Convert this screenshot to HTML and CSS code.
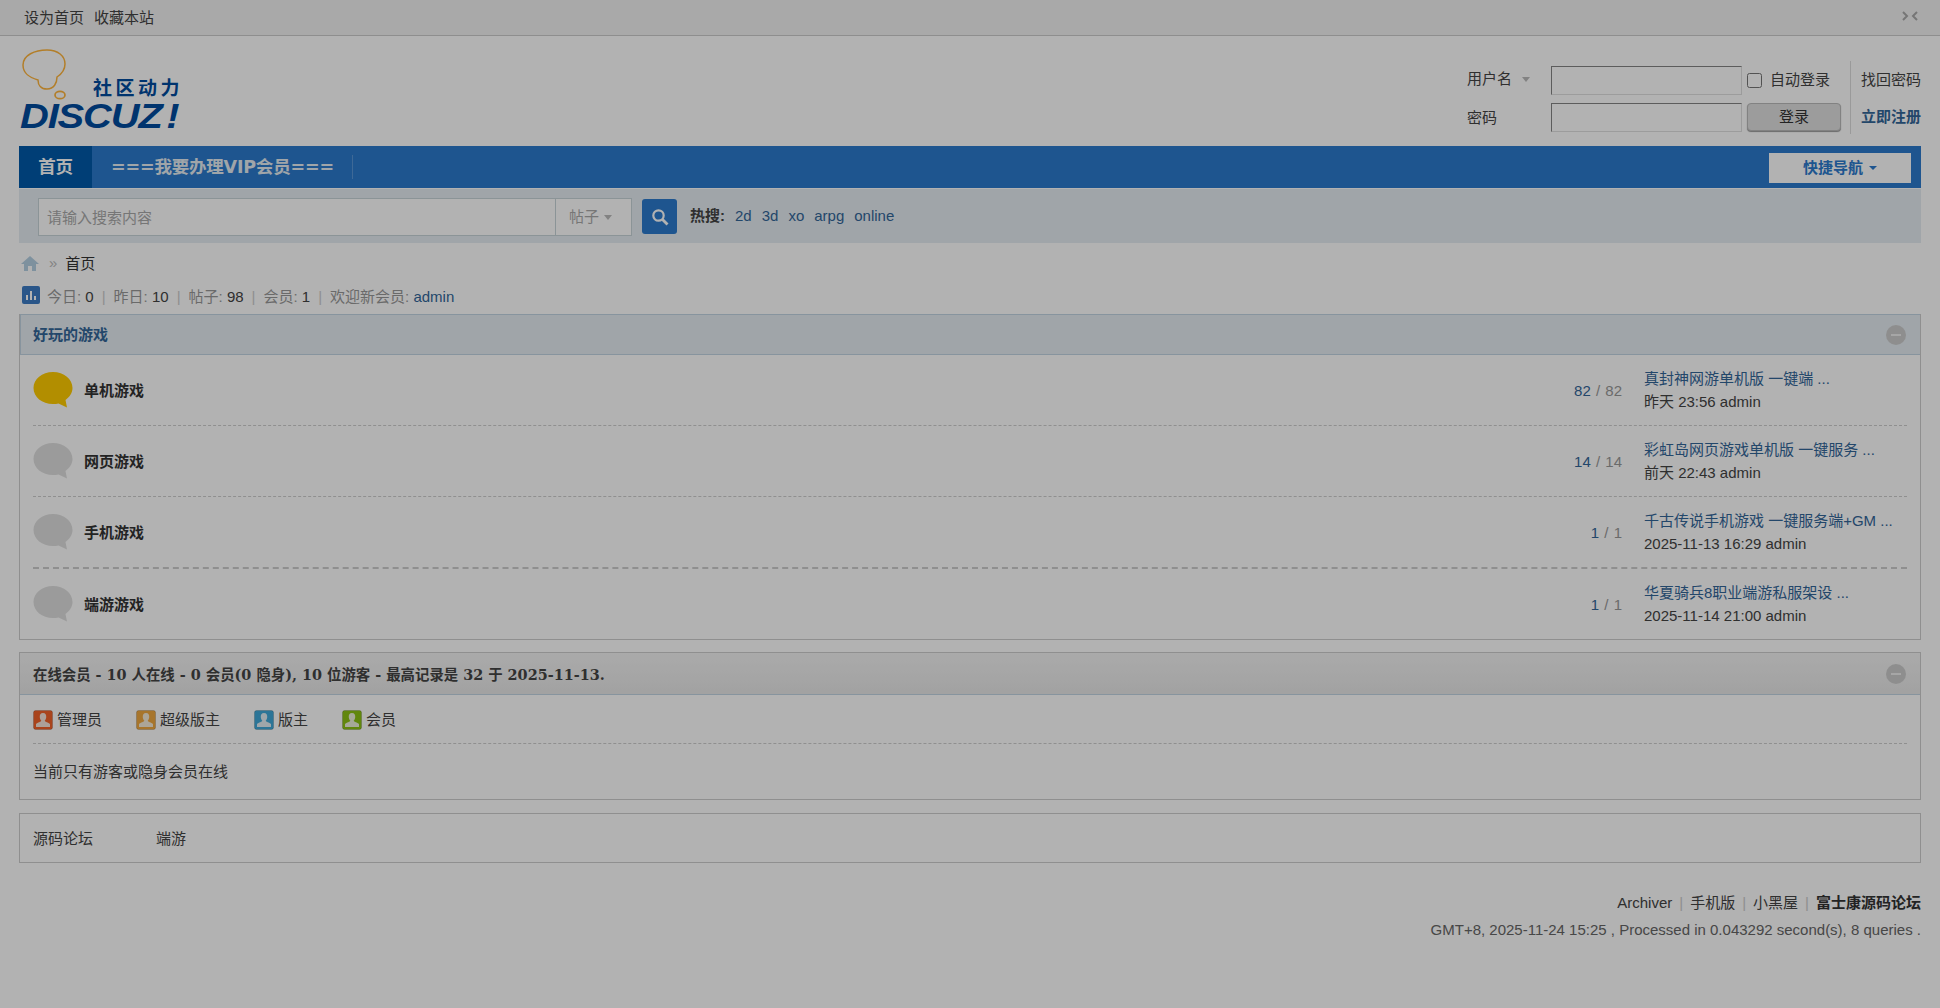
FILE: index.html
```html
<!DOCTYPE html>
<html lang="zh-CN">
<head>
<meta charset="utf-8">
<title>社区动力 Discuz!</title>
<link rel="stylesheet" href="styles.css">
</head>
<body>
<div class="topbar">
  <div class="topbar-links"><a>设为首页</a><a>收藏本站</a></div>
  <svg class="collapse-icon" width="16" height="10" viewBox="0 0 16 10"><path d="M1 1l4 4-4 4M15 1l-4 4 4 4" fill="none" stroke="#aaa" stroke-width="2"/></svg>
</div>
<div class="wrap">
  <header class="header">
    <div class="logo">
      <svg class="logo-bubble" width="60" height="64" viewBox="0 0 60 64">
        <path d="M13 25C13 15 25 10 37 10 48 10 55 16 55 24 55 31 50 35 47 37 47 43 44 49 37 49 31 49 28 45 28 40 20 38 13 33 13 25z" fill="none" stroke="#ffb53c" stroke-width="1.5"/>
        <ellipse cx="50" cy="55" rx="5" ry="3.700" fill="none" stroke="#ffb53c" stroke-width="1.700"/>
      </svg>
      <span class="logo-cn">社区动力</span>
      <span class="logo-en">DISCUZ<span class="logo-bang">!</span></span>
    </div>
    <form class="login">
      <div class="login-labels">
        <div class="login-label">用户名<i class="caret-grey"></i></div>
        <div class="login-label second">密码</div>
      </div>
      <div class="login-inputs">
        <input class="login-input" type="text">
        <input class="login-input" type="password">
      </div>
      <div class="login-actions">
        <label class="auto-login"><input class="check" type="checkbox">自动登录</label>
        <button class="login-btn" type="button">登录</button>
      </div>
      <div class="login-links">
        <a>找回密码</a>
        <a class="register">立即注册</a>
      </div>
    </form>
  </header>

  <nav class="nav">
    <a class="nav-item active">首页</a>
    <a class="nav-item">===我要办理VIP会员===</a>
    <a class="quick-nav">快捷导航<i class="caret-blue"></i></a>
  </nav>

  <div class="search">
    <div class="search-box">
      <span class="search-hint">请输入搜索内容</span>
      <span class="search-type">帖子<i class="caret-grey"></i></span>
    </div>
    <button class="search-btn" type="button">
      <svg width="20" height="20" viewBox="0 0 20 20"><circle cx="8.500" cy="8.500" r="5.200" fill="none" stroke="#fff" stroke-width="2.200"/><path d="M12.500 12.500l5 5" stroke="#fff" stroke-width="2.800"/></svg>
    </button>
    <div class="hot"><strong>热搜:</strong><a>2d</a><a>3d</a><a>xo</a><a>arpg</a><a>online</a></div>
  </div>

  <div class="crumb">
    <svg width="18" height="15" viewBox="0 0 18 15"><path d="M9 0L0 8h3v7h4v-5h4v5h4V8h3z" fill="#b5d0e3"/></svg>
    <em>»</em><span>首页</span>
  </div>

  <div class="stats">
    <svg class="stats-icon" width="18" height="18" viewBox="0 0 18 18"><rect width="18" height="18" rx="2" fill="#3d7cc4"/><path d="M4 9h2v5H4zM8 5h2v9H8zM12 10h2v4h-2z" fill="#fff"/></svg>
    <span>今日: <b>0</b></span><i>|</i><span>昨日: <b>10</b></span><i>|</i><span>帖子: <b>98</b></span><i>|</i><span>会员: <b>1</b></span><i>|</i><span>欢迎新会员: <a>admin</a></span>
  </div>

  <section class="panel">
    <div class="panel-head blue">
      <h2>好玩的游戏</h2>
      <span class="toggle"></span>
    </div>
    <div class="forum-row">
      <svg class="bubble" width="40" height="36" viewBox="0 0 40 36"><path d="M20 0C9 0 0.500 7 0.500 16S9 32 20 32c2 0 4-.2 5.500-.6L34 35.500 32.500 28C36.500 25 39.500 21 39.500 16 39.500 7 31 0 20 0z" fill="#ffcc00"/></svg>
      <a class="forum-name">单机游戏</a>
      <div class="forum-count"><a>82</a> / <span>82</span></div>
      <div class="forum-last"><a>真封神网游单机版 一键端 ...</a><div>昨天 23:56 admin</div></div>
    </div>
    <div class="forum-row">
      <svg class="bubble" width="40" height="36" viewBox="0 0 40 36"><path d="M20 0C9 0 0.500 7 0.500 16S9 32 20 32c2 0 4-.2 5.500-.6L34 35.500 32.500 28C36.500 25 39.500 21 39.500 16 39.500 7 31 0 20 0z" fill="#dfdfdf"/></svg>
      <a class="forum-name">网页游戏</a>
      <div class="forum-count"><a>14</a> / <span>14</span></div>
      <div class="forum-last"><a>彩虹岛网页游戏单机版 一键服务 ...</a><div>前天 22:43 admin</div></div>
    </div>
    <div class="forum-row thick">
      <svg class="bubble" width="40" height="36" viewBox="0 0 40 36"><path d="M20 0C9 0 0.500 7 0.500 16S9 32 20 32c2 0 4-.2 5.500-.6L34 35.500 32.500 28C36.500 25 39.500 21 39.500 16 39.500 7 31 0 20 0z" fill="#dfdfdf"/></svg>
      <a class="forum-name">手机游戏</a>
      <div class="forum-count"><a>1</a> / <span>1</span></div>
      <div class="forum-last"><a>千古传说手机游戏 一键服务端+GM ...</a><div>2025-11-13 16:29 admin</div></div>
    </div>
    <div class="forum-row last">
      <svg class="bubble" width="40" height="36" viewBox="0 0 40 36"><path d="M20 0C9 0 0.500 7 0.500 16S9 32 20 32c2 0 4-.2 5.500-.6L34 35.500 32.500 28C36.500 25 39.500 21 39.500 16 39.500 7 31 0 20 0z" fill="#dfdfdf"/></svg>
      <a class="forum-name">端游游戏</a>
      <div class="forum-count"><a>1</a> / <span>1</span></div>
      <div class="forum-last"><a>华夏骑兵8职业端游私服架设 ...</a><div>2025-11-14 21:00 admin</div></div>
    </div>
  </section>

  <section class="panel online">
    <div class="panel-head grey">
      <h3>在线会员 - 10 人在线 - 0 会员(0 隐身), 10 位游客 - 最高记录是 32 于 2025-11-13.</h3>
      <span class="toggle"></span>
    </div>
    <div class="legend">
      <span class="legend-item"><svg width="20" height="20" viewBox="0 0 20 20"><rect x=".5" y=".5" width="19" height="19" rx="2" fill="#f2622a"/><path d="M10 3c2.500 0 3.500 2 3.200 4.500-.2 1.500-1 2.500-1.500 3.300 0 1 3.800 1.700 5.300 3.200v3H3v-3c1.500-1.500 5.300-2.200 5.300-3.200-.5-.8-1.300-1.800-1.500-3.300C6.500 5 7.500 3 10 3z" fill="#f6e6dc"/></svg>管理员</span>
      <span class="legend-item"><svg width="20" height="20" viewBox="0 0 20 20"><rect x=".5" y=".5" width="19" height="19" rx="2" fill="#f0a840"/><path d="M10 3c2.500 0 3.500 2 3.200 4.500-.2 1.500-1 2.500-1.500 3.300 0 1 3.800 1.700 5.300 3.200v3H3v-3c1.500-1.500 5.300-2.200 5.300-3.200-.5-.8-1.300-1.800-1.500-3.300C6.500 5 7.500 3 10 3z" fill="#f6ecd8"/></svg>超级版主</span>
      <span class="legend-item"><svg width="20" height="20" viewBox="0 0 20 20"><rect x=".5" y=".5" width="19" height="19" rx="2" fill="#3fa8d8"/><path d="M10 3c2.500 0 3.500 2 3.200 4.500-.2 1.500-1 2.500-1.500 3.300 0 1 3.800 1.700 5.300 3.200v3H3v-3c1.500-1.500 5.300-2.200 5.300-3.200-.5-.8-1.300-1.800-1.500-3.300C6.500 5 7.500 3 10 3z" fill="#e2eef4"/></svg>版主</span>
      <span class="legend-item"><svg width="20" height="20" viewBox="0 0 20 20"><rect x=".5" y=".5" width="19" height="19" rx="2" fill="#8cc214"/><path d="M10 3c2.500 0 3.500 2 3.200 4.500-.2 1.500-1 2.500-1.500 3.300 0 1 3.800 1.700 5.300 3.200v3H3v-3c1.500-1.500 5.300-2.200 5.300-3.200-.5-.8-1.300-1.800-1.500-3.300C6.500 5 7.500 3 10 3z" fill="#eef2dc"/></svg>会员</span>
    </div>
    <div class="online-note">当前只有游客或隐身会员在线</div>
  </section>

  <section class="panel flinks"><a>源码论坛</a><a>端游</a></section>

  <footer class="footer">
    <div class="foot-links"><a>Archiver</a><i>|</i><a>手机版</a><i>|</i><a>小黑屋</a><i>|</i><strong>富士康源码论坛</strong></div>
    <div class="foot-info">GMT+8, 2025-11-24 15:25 , Processed in 0.043292 second(s), 8 queries .</div>
  </footer>
</div>
<div class="dim"></div>
</body>
</html>
```

FILE: styles.css
```css
* { box-sizing: border-box; }
html, body { margin: 0; padding: 0; height: 100%; }
body {
  background: #fff;
  color: #444;
  font: 15px/1.5 "Liberation Sans", "Noto Sans CJK SC", sans-serif;
  overflow: hidden;
}
a { color: inherit; text-decoration: none; }
em, i { font-style: normal; }
.dim { position: fixed; inset: 0; background: rgba(0, 0, 0, .3); }

.topbar {
  height: 36px;
  background: #f2f2f2;
  border-bottom: 1px solid #ccc;
  padding: 0 22px 0 24px;
  display: flex;
  align-items: center;
  justify-content: space-between;
}
.topbar-links { display: flex; gap: 10px; padding-top: 2px; }
.collapse-icon { margin-top: -3px; }

.wrap { padding: 0 19px; }
.header {
  height: 110px;
  display: flex;
  justify-content: space-between;
  align-items: flex-start;
}
.logo { position: relative; width: 200px; height: 110px; }
.logo-bubble { position: absolute; left: -9px; top: 4px; }
.logo-cn {
  position: absolute;
  left: 74px;
  top: 40px;
  color: #004b9e;
  font-size: 19px;
  font-weight: 700;
  letter-spacing: 3.500px;
  line-height: 26px;
  white-space: nowrap;
}
.logo-en {
  position: absolute;
  left: 1px;
  top: 62px;
  color: #004b9e;
  font: italic 700 35px/36px "Liberation Sans", sans-serif;
  letter-spacing: -1px;
  transform: scaleX(1.14);
  transform-origin: left;
  white-space: nowrap;
}
.logo-bang { margin-left: 4px; }

.login { display: flex; margin-top: 25px; height: 73px; }
.login-labels { width: 84px; padding-top: 3px; }
.login-label { height: 29px; line-height: 29px; white-space: nowrap; }
.login-label.second { margin-top: 10px; }
.login-inputs { display: flex; flex-direction: column; gap: 8px; width: 196px; padding-top: 5px; }
.login-input {
  height: 29px;
  width: 191px;
  border: 1px solid;
  border-color: #848484 #e0e0e0 #e0e0e0 #848484;
  background: #fff;
  padding: 0;
}
.login-actions { width: 103px; display: flex; flex-direction: column; gap: 8px; padding-top: 5px; }
.auto-login { height: 29px; display: flex; align-items: center; white-space: nowrap; }
.check { width: 15px; height: 15px; margin: 0 8px 0 0; }
.login-btn {
  width: 94px;
  height: 28px;
  border: 1px solid #bbb;
  border-radius: 4px;
  background: #e0e0e0;
  color: #333;
  font: inherit;
  box-shadow: 0 1px 1px #999;
  padding: 0;
}
.login-links {
  border-left: 1px solid #ddd;
  padding: 4px 0 0 10px;
  width: 71px;
  display: flex;
  flex-direction: column;
  gap: 8px;
  height: 73px;
}
.login-links a { line-height: 29px; height: 29px; white-space: nowrap; }
.register { color: #336699; font-weight: 700; }

.caret-grey {
  display: inline-block;
  margin-left: 10px;
  vertical-align: 2px;
  border: 4px solid transparent;
  border-top: 5px solid #bbb;
  border-bottom: 0;
}

.nav {
  height: 43px;
  background: #2b7acd;
  display: flex;
  align-items: stretch;
  border-bottom: 1px solid #fff;
  color: #fff;
}
.nav-item {
  padding: 0 19px;
  font: 700 17.500px/42px "DejaVu Sans", "Noto Sans CJK SC", sans-serif;
  letter-spacing: -.2px;
  white-space: nowrap;
  position: relative;
  color: #e5edf2;
}
.nav-item.active { background: #005aaa; width: 73px; padding: 0; text-align: center; color: #fff; }
.nav-item:not(.active)::after {
  content: "";
  position: absolute;
  right: 0;
  top: 9px;
  bottom: 9px;
  width: 1px;
  background: #5a97d8;
}
.quick-nav {
  margin: 7px 10px 5px auto;
  width: 142px;
  background: #fff;
  color: #2b7acd;
  font-weight: 700;
  line-height: 30px;
  text-align: center;
}
.caret-blue {
  display: inline-block;
  margin-left: 6px;
  vertical-align: 3px;
  border: 4px solid transparent;
  border-top: 4px solid #2b7acd;
  border-bottom: 0;
}

.search {
  height: 54px;
  background: #e5edf2;
  padding: 9px 0 0 19px;
  display: flex;
  align-items: flex-start;
}
.search-box {
  width: 594px;
  height: 38px;
  background: #fff;
  border: 1px solid #c8d4d8;
  display: flex;
  align-items: center;
  justify-content: space-between;
  color: #aaa;
}
.search-hint { padding: 2px 0 0 8px; }
.search-type {
  width: 76px;
  height: 100%;
  border-left: 1px solid #c8d4d8;
  line-height: 36px;
  padding-left: 13px;
  white-space: nowrap;
}
.search-type .caret-grey { margin-left: 5px; }
.search-btn {
  width: 35px;
  height: 35px;
  margin: 1px 0 0 10px;
  border: 0;
  border-radius: 3px;
  background: #2b7acd;
  padding: 0;
  display: flex;
  align-items: center;
  justify-content: center;
}
.hot { margin-left: 13px; line-height: 36px; display: flex; }
.hot strong { color: #444; margin-right: 10px; }
.hot a { color: #336699; margin-right: 10px; }

.crumb {
  height: 40px;
  display: flex;
  align-items: center;
  padding-left: 2px;
  color: #333;
}
.crumb span { padding-top: 2px; }
.crumb em { color: #bbb; margin: 0 8px 0 10px; }
.stats {
  height: 31px;
  padding: 0 0 3px 3px;
  display: flex;
  align-items: center;
  color: #999;
  white-space: pre;
}
.stats-icon { margin-right: 7px; margin-top: -4px; }
.stats b { font-weight: 400; color: #444; }
.stats i { color: #ccc; margin: 0 8px; }
.stats a { color: #336699; }

.panel { border: 1px solid #cdcdcd; }
.panel-head {
  height: 41px;
  display: flex;
  align-items: center;
  justify-content: space-between;
  padding: 0 14px 0 13px;
}
.panel-head.blue {
  margin-top: -1px;
  background: #e5edf2;
  border: 1px solid #c2d5e3;
  border-width: 1px 0 1px 1px;
  padding-left: 12px;
}
.panel-head.grey {
  height: 42px;
  background: linear-gradient(#f4f4f4, #e8e8e8);
  border-bottom: 1px solid #c2d5e3;
}
.panel-head h2 { margin: 0; padding-top: 2px; font-size: 15px; color: #336699; font-weight: 700; }
.panel-head h3 { margin: 0; padding-top: 3px; font: 700 14.400px/1.5 "DejaVu Serif", "Noto Sans CJK SC", serif; color: #444; }
.toggle {
  width: 20px;
  height: 20px;
  border-radius: 50%;
  background: #ccc;
  position: relative;
}
.toggle::after {
  content: "";
  position: absolute;
  left: 5px;
  right: 5px;
  top: 9px;
  height: 2px;
  background: #eee;
}

.forum-row {
  margin: 0 13px;
  height: 71px;
  border-bottom: 1px dashed #cdcdcd;
  display: flex;
  align-items: center;
}
.forum-row.thick { height: 72px; border-bottom-width: 2px; }
.forum-row.last { height: 70px; border-bottom: 0; }
.bubble { margin-right: 11px; flex: none; }
.forum-name { padding-top: 2px; font-weight: 700; color: #333; }
.forum-count { margin-left: auto; width: 100px; padding-top: 2px; text-align: right; word-spacing: 1px; color: #999; }
.forum-count a { color: #336699; }
.forum-last { width: 285px; padding-left: 22px; line-height: 23px; color: #444; white-space: nowrap; }
.forum-last a { color: #336699; }

.online { margin-top: 12px; }
.legend {
  margin: 0 13px;
  height: 49px;
  padding-top: 2px;
  border-bottom: 1px dashed #cdcdcd;
  display: flex;
  align-items: center;
  gap: 34px;
}
.legend-item { display: flex; align-items: center; gap: 4px; }
.legend-item rect { stroke: rgba(0, 0, 0, .15); }
.online-note { margin: 0 13px; height: 55px; line-height: 55px; }

.flinks {
  margin-top: 13px;
  height: 50px;
  padding: 2px 13px 0;
  display: flex;
  align-items: center;
}
.flinks a:first-child { width: 123px; }

.footer { margin-top: 26px; text-align: right; }
.foot-links { line-height: 27px; }
.foot-links i { color: #ccc; margin: 0 7px; }
.foot-links strong { color: #333; }
.foot-info { line-height: 27px; color: #666; }
```
